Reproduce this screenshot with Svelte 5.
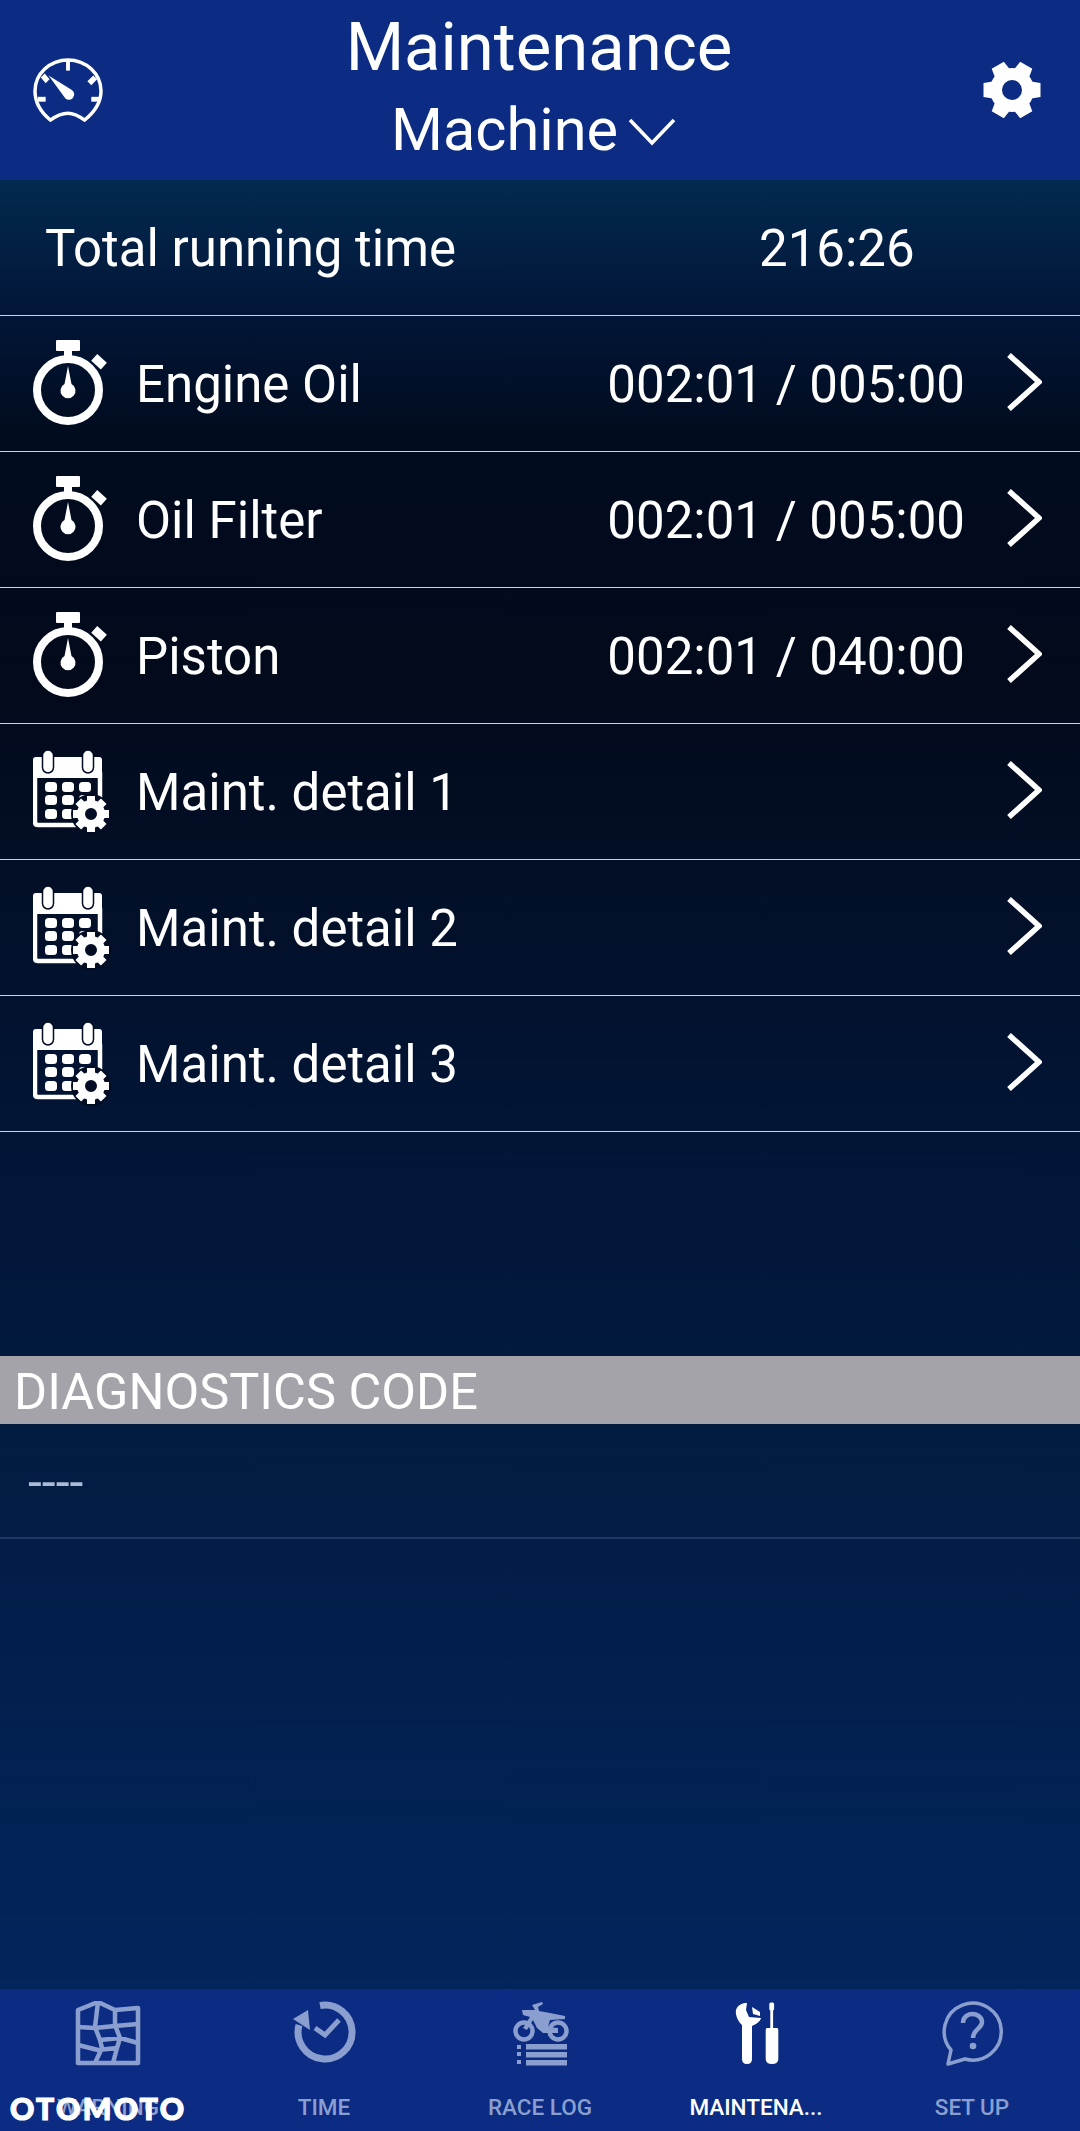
<script>
	const timers = [
		{ name: 'Engine Oil', value: '002:01 / 005:00' },
		{ name: 'Oil Filter', value: '002:01 / 005:00' },
		{ name: 'Piston', value: '002:01 / 040:00' }
	];
	const details = ['Maint. detail 1', 'Maint. detail 2', 'Maint. detail 3'];
	const dotXs = [18, 35, 52];
	const dotYs = [40, 53, 67];
	const teeth = [0, 45, 90, 135, 180, 225, 270, 315];
	const bigTeeth = [30, 90, 150, 210, 270, 330];
</script>

{#snippet chevron()}
	<svg class="chevron" width="36" height="58" viewBox="0 0 36 58">
		<path d="M3 2 L33 29 L3 56" fill="none" stroke="#fff" stroke-width="5.500" />
	</svg>
{/snippet}

{#snippet stopwatch()}
	<svg class="row-icon" width="80" height="90" viewBox="0 0 80 90">
		<rect x="23" y="1" width="24" height="11" rx="1" fill="#fff" />
		<rect x="31" y="10" width="8" height="8" fill="#fff" />
		<rect x="60" y="18" width="13" height="9" transform="rotate(42 66 22)" fill="#fff" />
		<circle cx="35" cy="51" r="31" fill="none" stroke="#fff" stroke-width="8" />
		<path d="M35 27 L38.500 45 A7.500 7.500 0 1 1 31.500 45 Z" fill="#fff" />
	</svg>
{/snippet}

{#snippet calendar()}
	<svg class="row-icon" width="80" height="90" viewBox="0 0 80 90">
		<path d="M67 25 V60 M2 25 V75 Q2 78 5 78 H46" fill="none" stroke="#fff" stroke-width="4.500" />
		<rect x="0" y="10" width="69" height="21" rx="3" fill="#fff" />
		{#each [15, 55] as x}
			<rect x={x - 5.5} y="3" width="11" height="23" rx="5.500" fill="#fff" stroke="#020c22" stroke-width="1.500" />
		{/each}
		{#each dotYs as y, r}
			{#each dotXs as x, c}
				{#if !(r === 2 && c === 2)}
					<rect x={x - 6} y={y - 5} width="12" height="10" rx="3.500" fill="#fff" />
				{/if}
			{/each}
		{/each}
		<circle cx="58" cy="67" r="20" fill="#020c22" />
		{#each teeth as a}
			<rect x="54" y="49" width="8" height="8" transform="rotate({a} 58 67)" fill="#fff" />
		{/each}
		<circle cx="58" cy="67" r="10" fill="none" stroke="#fff" stroke-width="8" />
	</svg>
{/snippet}

<div class="screen">
	<header class="top">
		<svg class="speedo" width="70" height="66" viewBox="0 0 72 68">
			<path d="M18 64 C8 56 2 46 2 34 A34 32 0 0 1 70 34 C70 46 63 56 53 64 C46 59 42 57 36 57 C30 57 25 59 18 64 Z" fill="none" stroke="#fff" stroke-width="3.600" stroke-linejoin="round" />
			<rect x="34" y="2" width="4" height="11" fill="#fff" />
			<path d="M8 20 L12 16 L17 22 L13 26 Z M62 18 L66 22 L60 28 L56 24 Z" fill="#fff" />
			<rect x="5" y="40" width="8" height="5" fill="#fff" />
			<rect x="60" y="40" width="8" height="5" fill="#fff" />
			<path d="M16 18 L40 33 A5.500 5.500 0 1 1 32 40 Z" fill="#fff" />
		</svg>
		<div class="titles">
			<div class="title">Maintenance</div>
			<div class="subtitle">
				<span>Machine</span>
				<svg width="48" height="30" viewBox="0 0 48 30"><path d="M2 3 L24 26 L46 3" fill="none" stroke="#fff" stroke-width="3.600" /></svg>
			</div>
		</div>
		<svg class="gear" width="60" height="60" viewBox="0 0 60 60">
			{#each bigTeeth as a}
				<path d="M23 1.500 H37 L39 14 H21 Z" transform="rotate({a} 30 30)" fill="#fff" />
			{/each}
			<circle cx="30" cy="30" r="16" fill="none" stroke="#fff" stroke-width="12" />
		</svg>
	</header>

	<main class="body">
		<div class="total">
			<span class="total-label">Total running time</span>
			<span class="total-value">216:26</span>
		</div>

		{#each timers as t}
			<div class="row">
				{@render stopwatch()}
				<span class="row-name">{t.name}</span>
				<span class="row-value">{t.value}</span>
				{@render chevron()}
			</div>
		{/each}
		{#each details as d}
			<div class="row">
				{@render calendar()}
				<span class="row-name">{d}</span>
				{@render chevron()}
			</div>
		{/each}

		<div class="diag-head">DIAGNOSTICS CODE</div>
		<div class="diag-row">----</div>
	</main>

	<nav class="tabs">
		<div class="tab">
			<svg width="68" height="66" viewBox="0 0 68 66" fill="none" stroke="currentColor" stroke-width="4.500" stroke-linejoin="round">
				<path d="M4 9 L24 1 L41 9 L64 7 L64 62 L4 62 Z" />
				<path d="M24 1 L21 26 L26 39 L28 47 L21 62 M41 9 L41 24 L46 37 L43 47 L39 62 M4 26 L21 27 L41 25 L64 23 M4 44 L24 49 L43 47 M26 39 L46 37 L64 42" />
			</svg>
			<span>WARNING</span>
		</div>
		<div class="tab">
			<svg width="68" height="66" viewBox="0 0 68 66" fill="none" stroke="currentColor">
				<path d="M30 4.500 A27 27 0 1 1 9 24" stroke-width="7" />
				<path d="M3 18 L18 9 L20 29 Z" fill="currentColor" stroke="none" />
				<path d="M25 27 L35 34 L49 19" stroke-width="5" />
			</svg>
			<span>TIME</span>
		</div>
		<div class="tab">
			<svg width="68" height="66" viewBox="0 0 68 66">
				<g fill="none" stroke="currentColor" stroke-width="4.500">
					<circle cx="18" cy="30" r="8.500" />
					<circle cx="52" cy="30" r="8.500" />
				</g>
				<path d="M16 9 L29 9 L26 4 L36 1 L37 3 L32 6 L33 10 L44 12 L59 15 L59 18 L44 19 L42 26 L52 27 L52 32 L37 32 L31 27 L27 19 L21 29 L17 27 L24 16 L17 14 Z" fill="currentColor" />
				<rect x="11" y="44" width="4" height="4" fill="currentColor" />
				<rect x="11" y="51" width="4" height="4" fill="currentColor" />
				<rect x="11" y="59" width="4" height="4" fill="currentColor" />
				<rect x="20" y="43" width="41" height="5.500" fill="currentColor" />
				<rect x="20" y="51" width="41" height="5.500" fill="currentColor" />
				<rect x="20" y="59" width="41" height="5.500" fill="currentColor" />
			</svg>
			<span>RACE LOG</span>
		</div>
		<div class="tab active">
			<svg width="68" height="66" viewBox="0 0 68 66" fill="currentColor">
				<path d="M23 2 C16 3 13 8 14 13 C15 19 18 22 20 24 L20 58 Q20 63 25 63 Q30 63 30 58 L30 25 C34 23 38 21 39 17 L27 16 L24 9 L25 2 Z" />
				<path d="M30 6 L38 11 L38 15 L31 13 Z" />
				<rect x="47.300" y="1.500" width="4.800" height="8" rx="1.500" />
				<rect x="48.300" y="9" width="2.800" height="18" />
				<path d="M45 27 H55 Q56.300 27 56.300 29 V58 Q56.300 63 50 63 Q43.700 63 43.700 58 V29 Q43.700 27 45 27 Z" />
			</svg>
			<span>MAINTENA...</span>
		</div>
		<div class="tab">
			<svg width="68" height="66" viewBox="0 0 68 66" fill="none" stroke="currentColor" stroke-width="3.500">
				<path d="M10 63 L13 49 A28.500 28.500 0 1 1 27 58 Z" stroke-linejoin="round" />
				<path d="M25 22 C25 15 31 13 34.500 13 C40 13 44 17 44 21 C44 28 35 28 35 37" stroke-width="4.500" />
				<circle cx="35" cy="45" r="3.300" fill="currentColor" stroke="none" />
			</svg>
			<span>SET UP</span>
		</div>
	</nav>

	<div class="watermark">OTOMOTO</div>
</div>

<style>
	:global(body) {
		margin: 0;
		background: #02235c;
	}

	.screen {
		position: relative;
		width: 1080px;
		height: 2131px;
		display: flex;
		flex-direction: column;
		overflow: hidden;
		font-family: Roboto, "Liberation Sans", sans-serif;
		color: #fff;
	}

	.top {
		height: 180px;
		flex: none;
		background: #0b2c82;
		display: flex;
		align-items: center;
		box-sizing: border-box;
		padding: 0 38px 0 33px;
	}

	.speedo {
		flex: none;
		margin-top: 1px;
	}

	.gear {
		flex: none;
	}

	.titles {
		flex: 1;
		text-align: center;
		padding-right: 7px;
		margin-top: -8px;
	}

	.title {
		font-size: 67px;
		line-height: 88px;
	}

	.subtitle {
		font-size: 59.500px;
		line-height: 78px;
		display: flex;
		justify-content: center;
		align-items: center;
		gap: 10px;
		margin-right: 11px;
	}

	.subtitle svg {
		margin-top: 4px;
	}

	.body {
		flex: 1;
		background: linear-gradient(180deg, #022a50 0, #021638 130px, #010c1f 250px, #020a1b 500px, #021433 900px, #021c44 1300px, #03245c 1810px);
		display: flex;
		flex-direction: column;
	}

	.total {
		height: 136px;
		flex: none;
		box-sizing: border-box;
		border-bottom: 1px solid #c8d4e0;
		display: flex;
		align-items: center;
		font-size: 51px;
		padding: 2px 0 0 45px;
	}

	.total-label {
		width: 714px;
	}

	.row {
		height: 136px;
		flex: none;
		box-sizing: border-box;
		border-bottom: 1px solid #c8d4e0;
		display: flex;
		align-items: center;
		padding: 0 38px 0 33px;
		font-size: 51px;
	}

	.row-icon {
		flex: none;
		margin-right: 24px;
	}

	.row-name {
		flex: 1;
		margin-left: -1px;
		padding-top: 2px;
	}

	.row-value {
		margin-right: 41px;
		padding-top: 2px;
	}

	.chevron {
		flex: none;
		margin-bottom: 4px;
	}

	.diag-head {
		margin-top: 224px;
		height: 68px;
		flex: none;
		background: #a3a3a9;
		font-size: 50.500px;
		line-height: 72px;
		padding-left: 14px;
	}

	.diag-row {
		height: 115px;
		flex: none;
		box-sizing: border-box;
		border-bottom: 2px solid #1f3a62;
		color: #a9bcd6;
		font-size: 50px;
		line-height: 116px;
		padding-left: 28px;
	}

	.tabs {
		height: 142px;
		flex: none;
		background: #0b2c82;
		display: grid;
		grid-template-columns: repeat(5, 216px);
	}

	.tab {
		display: flex;
		flex-direction: column;
		align-items: center;
		color: #8a9fcf;
		padding-top: 12px;
		font-size: 22.500px;
		font-weight: 500;
	}

	.tab span {
		margin-top: 27px;
		line-height: 26px;
	}

	.tab.active {
		color: #fff;
	}

	.watermark {
		position: absolute;
		left: 10px;
		bottom: 6px;
		font-family: Lato, sans-serif;
		font-weight: 900;
		font-size: 30px;
		letter-spacing: 2.400px;
		line-height: 34px;
		color: #fff;
		-webkit-text-stroke: 1.2px #fff;
	}
</style>
